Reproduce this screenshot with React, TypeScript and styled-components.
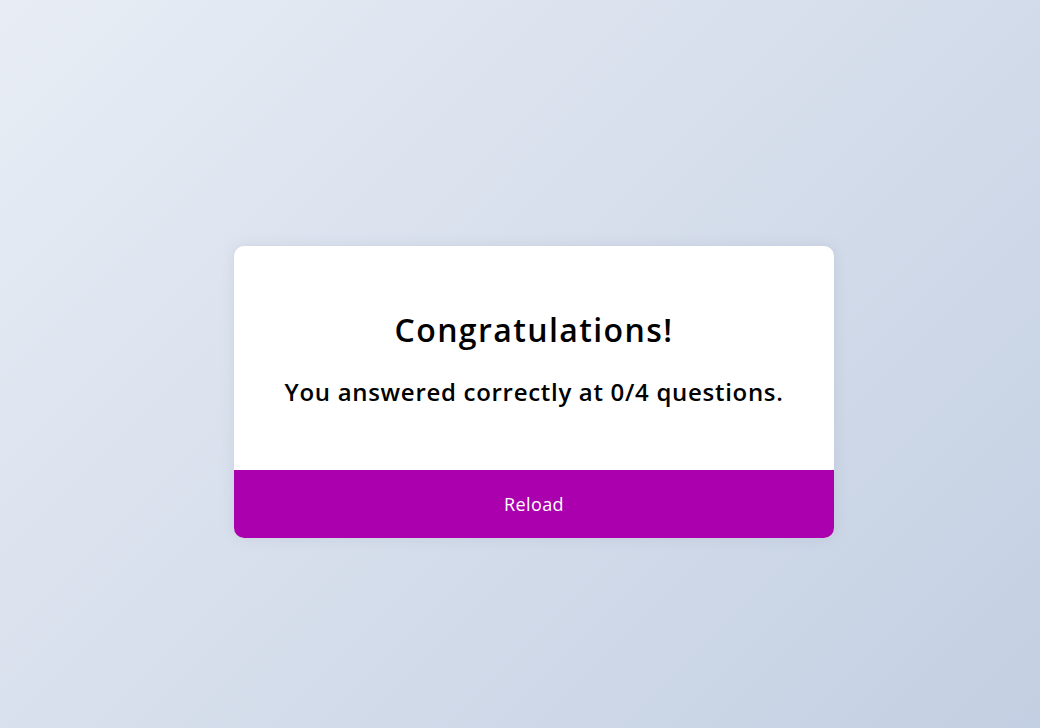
import React from "react";
import styled, { createGlobalStyle } from "styled-components";

const GlobalStyle = createGlobalStyle`
  html, body { margin: 0; padding: 0; height: 100%; }
  body {
    font-family: "Open Sans", "Liberation Sans", sans-serif;
    background: linear-gradient(135deg, #e8edf5 0%, #c3cfe2 100%);
    min-height: 100vh;
  }
  #root { min-height: 100vh; }
`;

const Page = styled.main`
  min-height: 100vh;
  box-sizing: border-box;
  padding: 56px 0 0 28px;
  display: flex;
  align-items: center;
  justify-content: center;
`;

const Card = styled.section`
  width: 600px;
  background: #ffffff;
  border-radius: 10px;
  overflow: hidden;
  box-shadow: 0 0 12px rgba(150, 160, 185, 0.25);
  display: flex;
  flex-direction: column;
`;

const Body = styled.div`
  height: 224px;
  display: flex;
  flex-direction: column;
  align-items: center;
  justify-content: flex-start;
  gap: 27px;
  padding-top: 64px;
  box-sizing: border-box;
`;

const Title = styled.h1`
  margin: 0;
  font-size: 32px;
  font-weight: 600;
  color: #000;
  line-height: 40px;
  letter-spacing: 1.4px;
`;

const Subtitle = styled.h2`
  margin: 0;
  font-size: 24px;
  font-weight: 600;
  color: #000;
  line-height: 30px;
  letter-spacing: 0.7px;
`;

const ReloadButton = styled.button`
  height: 68px;
  border: none;
  background: #aa00ae;
  color: #ffffff;
  font-family: inherit;
  font-size: 18px;
  font-weight: 400;
  letter-spacing: 0.4px;
  cursor: pointer;
`;

export default function App() {
  return (
    <>
      <GlobalStyle />
      <Page>
        <Card>
          <Body>
            <Title>Congratulations!</Title>
            <Subtitle>You answered correctly at 0/4 questions.</Subtitle>
          </Body>
          <ReloadButton>Reload</ReloadButton>
        </Card>
      </Page>
    </>
  );
}
